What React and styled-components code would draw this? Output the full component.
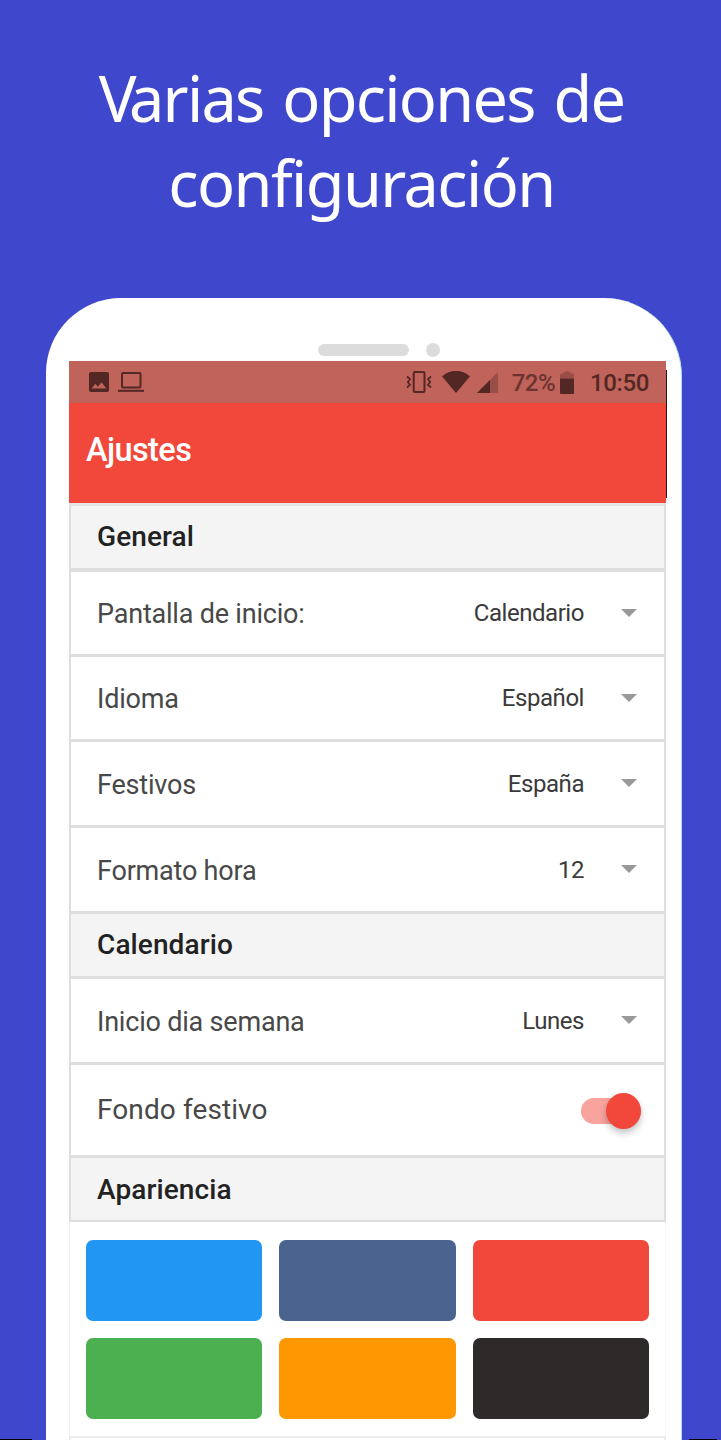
import React from "react";
import styled, { createGlobalStyle } from "styled-components";

const GlobalStyle = createGlobalStyle`
  * { box-sizing: border-box; }
  html, body { margin: 0; padding: 0; background: #3f47cc; }
`;

const Page = styled.main`
  width: 721px;
  height: 1440px;
  overflow: hidden;
  position: relative;
  background: #3f47cc;
  display: flex;
  flex-direction: column;
  align-items: center;
  font-family: Roboto, "Liberation Sans", sans-serif;
`;

const Headline = styled.h1`
  margin: 0;
  height: 298px;
  flex: none;
  padding: 55px 0 0 2px;
  font: 400 63px/85px "Noto Sans", "Open Sans", sans-serif;
  color: #fff;
  display: flex;
  flex-direction: column;
  align-items: center;
`;

const HeadlineRow = styled.span`
  white-space: nowrap;
  font-variant-ligatures: none;
  letter-spacing: ${(p) => p.$tracking}px;
  word-spacing: 4px;
`;

const Kerned = styled.span`
  letter-spacing: -7.5px;
`;

const Phone = styled.section`
  width: 636px;
  height: 1142px;
  flex: none;
  margin-left: 7px;
  background: #fff;
  border-right: 1px solid #b9dfe4;
  border-radius: 75px 78px 0 0;
  display: flex;
  flex-direction: column;
  padding: 0 15px 0 23px;
  position: relative;
`;

const Bezel = styled.div`
  height: 63px;
  flex: none;
  display: flex;
  justify-content: flex-start;
  align-items: flex-start;
  gap: 17px;
  padding: 46px 0 0 249px;
`;

const Speaker = styled.span`
  width: 91px;
  height: 12px;
  border-radius: 6px;
  background: #dcdcdc;
  filter: blur(0.7px);
`;

const Camera = styled.span`
  width: 14px;
  height: 14px;
  margin-top: -1px;
  border-radius: 50%;
  background: #dcdcdc;
  filter: blur(0.7px);
`;

const StatusBar = styled.div`
  width: 597px;
  height: 42px;
  flex: none;
  background: #bf635b;
  color: #532724;
  display: flex;
  align-items: center;
  padding: 0 17px 0 20px;
  svg { display: block; flex: none; }
`;

const StatusLeft = styled.div`
  display: flex;
  gap: 9px;
  flex: 1;
  padding-bottom: 1px;
`;

const StatusText = styled.span`
  font-size: 24px;
  line-height: 42px;
  font-weight: 500;
  color: ${(p) => p.$color ?? "inherit"};
  margin-left: ${(p) => p.$gap}px;
  letter-spacing: ${(p) => p.$tracking}px;
  padding-top: 2px;
`;

const AppBar = styled.header`
  width: 597px;
  height: 100px;
  flex: none;
  background: #f1483b;
  padding-left: 17px;
  color: #fff;
  font-size: 32.5px;
  font-weight: 500;
  line-height: 95px;
  letter-spacing: -0.6px;
`;

const ScreenEdge = styled.span`
  position: absolute;
  top: 72px;
  left: 620px;
  width: 1px;
  height: 128px;
  background: #2a1513;
`;

const List = styled.div`
  width: 597px;
  border-top: 1px solid #e9e9e9;
`;

const Item = styled.div`
  height: ${(p) => p.$height}px;
  border: 2px solid #dedede;
  border-top-width: ${(p) => (p.$first ? 2 : 0)}px;
  border-top-color: #e4e4e4;
  border-bottom-width: ${(p) => p.$line ?? 3}px;
  display: flex;
  align-items: center;
  padding: ${(p) => p.$drop ?? 0}px 24px 0 26px;
  background: #fff;
`;

const SectionTitle = styled(Item)`
  background: #f4f4f4;
  color: #222;
  font-size: 28px;
  font-weight: 500;
  padding-bottom: ${(p) => p.$lift ?? 2}px;
  letter-spacing: 0.1px;
`;

const Label = styled.span`
  flex: 1;
  font-size: ${(p) => p.$size ?? 27}px;
  color: #484848;
  letter-spacing: ${(p) => p.$tracking ?? -0.2}px;
  padding-bottom: ${(p) => p.$lift ?? 0}px;
`;

const Value = styled.span`
  font-size: 24px;
  color: #3a3a3a;
  margin-right: 37px;
  padding-bottom: 2px;
  letter-spacing: -0.45px;
`;

const Caret = styled.span`
  border: 8px solid transparent;
  border-top-color: #999;
  border-bottom: 0;
  margin: 0 3px 3px 0;
`;

const Track = styled.span`
  width: 60px;
  height: 26px;
  border-radius: 13px;
  background: #f8a39d;
  display: flex;
  align-items: center;
  justify-content: flex-end;
  margin: 2px -1px 0 0;
`;

const Thumb = styled.span`
  width: 35px;
  height: 36px;
  border-radius: 50%;
  background: #f1483b;
  box-shadow: 0 4px 7px rgba(0, 0, 0, 0.24);
`;

const Palette = styled.div`
  display: grid;
  grid-template-columns: repeat(3, 176.7px);
  grid-auto-rows: 81px;
  column-gap: 16.9px;
  row-gap: 17px;
  width: 597px;
  padding: 18px 0 17px 15.5px;
  border-left: 1px solid #f0f0f0;
  border-right: 1px solid #f7f7f7;
`;

const Swatch = styled.span`
  border-radius: 7px;
  background: ${(p) => p.$color};
`;

const NextPanel = styled.div`
  width: 597px;
  height: 8px;
  border: 2px solid #ececec;
  border-bottom: 0;
`;

const CornerMark = styled.span`
  position: absolute;
  bottom: 0;
  left: ${(p) => p.$left}px;
  width: ${(p) => p.$width}px;
  height: 1px;
  background: #000;
`;

function PictureIcon() {
  return (
    <svg width="20" height="20" viewBox="0 0 20 20">
      <path fill="currentColor" fillRule="evenodd" d="M2 0h16q2 0 2 2v16q0 2-2 2H2q-2 0-2-2V2q0-2 2-2zM2.5 16.5h14.8l-4.8-6.2-3.5 4.5-2.6-3.1z" />
    </svg>
  );
}

function LaptopIcon() {
  return (
    <svg width="26" height="20" viewBox="0 0 26 20" fill="none" stroke="currentColor" strokeWidth="2">
      <rect x="4" y="1" width="18.5" height="14.5" rx="1" />
      <path d="M0 18.8h26" />
    </svg>
  );
}

function VibrateIcon() {
  return (
    <svg width="26" height="24" viewBox="0 0 26 24" fill="none" stroke="currentColor" strokeWidth="2">
      <rect x="7.7" y="2" width="10.8" height="20" rx="1.2" />
      <path strokeWidth="1.8" d="M1 6.5l3 2.7L1.8 12 4 14.8 1 17.5M25 6.5l-3 2.7 2.2 2.8-2.2 2.8 3 2.7" />
    </svg>
  );
}

function WifiIcon() {
  return (
    <svg width="28" height="22" viewBox="0 0 28 22" fill="currentColor">
      <path d="M0 5.2Q6 0 14 0t14 5.2L14 22z" />
    </svg>
  );
}

function SignalIcon() {
  return (
    <svg width="21" height="21" viewBox="0 0 21 21" fill="currentColor">
      <path opacity=".35" d="M21 0v21H0z" />
      <path d="M13 8v13H0z" />
    </svg>
  );
}

function BatteryIcon() {
  return (
    <svg width="14" height="23" viewBox="0 0 14 23" fill="currentColor">
      <path opacity=".35" d="M0 7.5V4q0-1.5 1.5-1.5H3Q4 0 7 0t4 2.5h1.5Q14 2.5 14 4v3.5z" />
      <path d="M0 7.5h14V22q0 1-1 1H1q-1 0-1-1z" />
    </svg>
  );
}

const Spaced = styled.span`
  margin-left: ${(p) => p.$gap}px;
`;

function Choice({ label, value, height, drop = 2 }) {
  return (
    <Item $height={height} $drop={drop}>
      <Label>{label}</Label>
      <Value>{value}</Value>
      <Caret />
    </Item>
  );
}

const colors = ["#2196f3", "#4a628e", "#f1483b", "#4caf50", "#ff9800", "#2e2a2a"];

export default function App() {
  return (
    <Page>
      <GlobalStyle />
      <Headline>
        <HeadlineRow $tracking={-1.7}><Kerned>V</Kerned>arias opciones de</HeadlineRow>
        <HeadlineRow $tracking={-1.55}>configuración</HeadlineRow>
      </Headline>
      <Phone>
        <Bezel>
          <Speaker />
          <Camera />
        </Bezel>
        <StatusBar>
          <StatusLeft>
            <PictureIcon />
            <LaptopIcon />
          </StatusLeft>
          <VibrateIcon />
          <Spaced $gap={10}><WifiIcon /></Spaced>
          <Spaced $gap={7}><SignalIcon /></Spaced>
          <StatusText $color="#6c332f" $gap={14} $tracking={-0.5}>72%</StatusText>
          <Spaced $gap={5}><BatteryIcon /></Spaced>
          <StatusText $gap={16} $tracking={-0.4}>10:50</StatusText>
        </StatusBar>
        <AppBar>Ajustes</AppBar>
        <List>
          <SectionTitle $first $height={68} $line={4}>General</SectionTitle>
          <Choice label="Pantalla de inicio:" value="Calendario" height={85} />
          <Choice label="Idioma" value="Español" height={85} />
          <Choice label="Festivos" value="España" height={86} />
          <Choice label="Formato hora" value="12" height={86} />
          <SectionTitle $height={65}>Calendario</SectionTitle>
          <Choice label="Inicio dia semana" value="Lunes" height={86} />
          <Item $height={93}>
            <Label $size={28} $tracking={0.1} $lift={2}>Fondo festivo</Label>
            <Track><Thumb /></Track>
          </Item>
          <SectionTitle $height={64} $line={2} $lift={0}>Apariencia</SectionTitle>
        </List>
        <Palette>
          {colors.map((color) => <Swatch key={color} $color={color} />)}
        </Palette>
        <NextPanel />
        <ScreenEdge />
      </Phone>
      <CornerMark $left={0} $width={32} />
      <CornerMark $left={689} $width={28} />
    </Page>
  );
}
